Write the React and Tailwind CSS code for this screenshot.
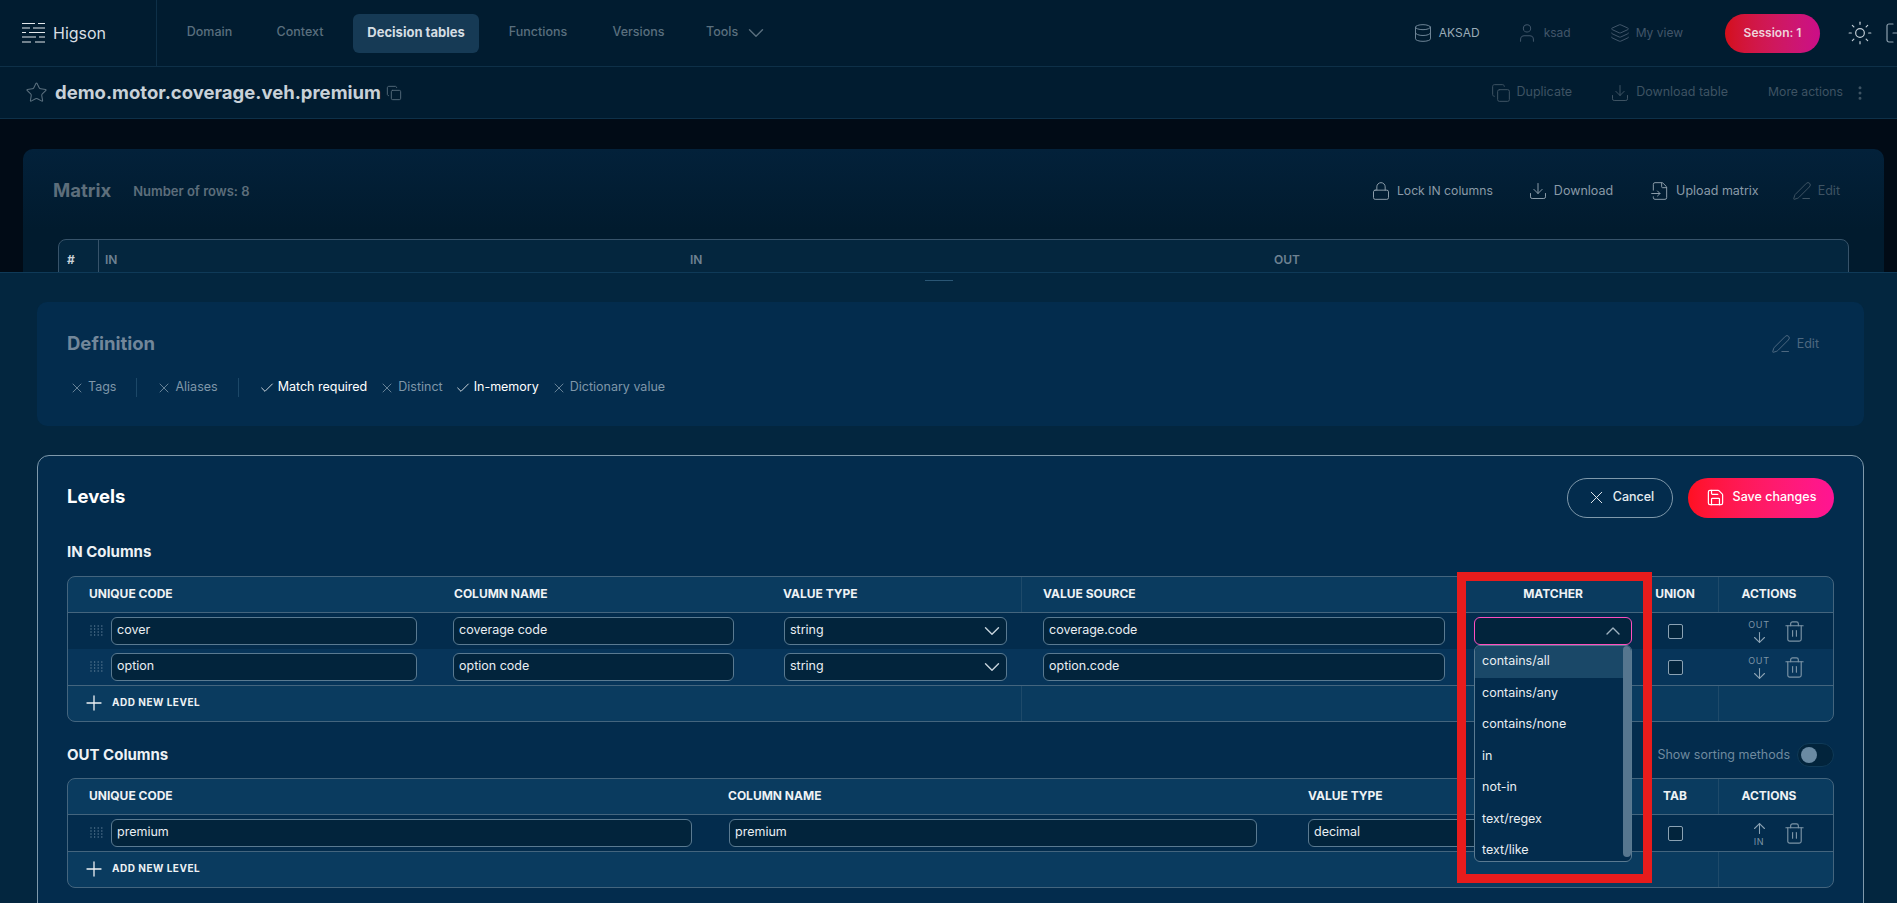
import React from "react";
import {
    ArrowDown, ArrowUp, Check, ChevronDown, ChevronUp, Copy, Database, Download, EllipsisVertical,
    FileInput, Layers, Lock, LogOut, PenLine, Plus, Save, Star, Sun, Trash2, User, X,
} from "lucide-react";

const IN_GRID = "grid grid-cols-[367px_331px_255px_436px_195px_66px_115px]";
const OUT_GRID = "grid grid-cols-[642px_580px_362px_66px_115px]";
const MATCHERS = ["contains/all", "contains/any", "contains/none", "in", "not-in", "text/regex", "text/like"];

function Logo() {
    return (
        <svg width="25" height="22" viewBox="0 0 25 22" fill="none" stroke="#e3e8ec" strokeWidth="1.2">
            <path d="M1 1.5h13M17 1.5h7M1 6h8M12 6h12M1 10.5h4M8 10.5h16M1 15h14M18 15h6M1 20h9M14 20h10" />
        </svg>
    );
}

function Grip() {
    return (
        <svg width="13" height="12" viewBox="0 0 13 12" fill="#5f7f97">
            {[1, 4, 7, 10].map((y) =>
                [1, 4.6, 8.2, 11.8].map((x) => <rect key={x + "-" + y} x={x - 0.6} y={y - 0.6} width="1.2" height="1.2" />)
            )}
        </svg>
    );
}

function Field({ children, className }) {
    return (
        <div className={"flex h-[28px] items-center rounded-md border border-[#5a7a91] bg-[#02243c] px-[5px] pb-[1px] text-[12.5px] text-[#e9eef2] " + className}>
            {children}
        </div>
    );
}

function SelectField({ children, className }) {
    return (
        <Field className={"justify-between " + className}>
            <span>{children}</span>
            <ChevronDown className="mr-[-4px] w-[26px] h-[26px] text-[#c7d3dc]" strokeWidth={1.3} />
        </Field>
    );
}

function NavItem({ children, active, className }) {
    return (
        <div className={"flex h-[39px] items-center rounded-md pb-[1px] " + (active ? "bg-[#163a55] text-[13px] font-bold text-[#d5dde3] " : "text-[12.5px] font-medium text-[#5a6f7e] ") + className}>
            {children}
        </div>
    );
}

function HeaderCell({ children, className }) {
    return (
        <div className={"flex h-[35px] items-center pb-[2px] text-[12px] font-bold text-[#eef2f5] " + className}>
            {children}
        </div>
    );
}

function Chip({ on, children }) {
    const Icon = on ? Check : X;
    return (
        <div className={"flex items-center gap-[3px] text-[12.5px] " + (on ? "text-white" : "text-[#7f97a9]")}>
            <Icon className="w-4 h-4" strokeWidth={1.2} />
            <span>{children}</span>
        </div>
    );
}

function ActionLink({ icon: Icon, children, className }) {
    return (
        <div className={"flex items-center gap-[6px] " + className}>
            <Icon className="w-5 h-5" strokeWidth={1.2} />
            <span>{children}</span>
        </div>
    );
}

function Checkbox() {
    return (
        <div className="flex items-center justify-center pr-[20px]">
            <div className="h-[15px] w-[15px] rounded-[2px] border border-[#8aa2b4] bg-[#02243c]" />
        </div>
    );
}

function RowActions({ out }) {
    return (
        <div className="flex items-center gap-[12px] pl-[29px]">
            <div className={"flex w-[24px] flex-col items-center text-[9px] leading-[9px] tracking-[0.08em] text-[#7c94a6] " + (out ? "mt-[3px]" : "")}>
                {out ? <span>OUT</span> : <ArrowUp className="w-[17px] h-[17px] text-[#8ba2b3]" strokeWidth={1.5} />}
                {out ? <ArrowDown className="w-[17px] h-[17px] text-[#8ba2b3]" strokeWidth={1.5} /> : <span>IN</span>}
            </div>
            <Trash2 className="w-[23px] h-[23px] text-[#7c94a6]" strokeWidth={1.2} />
        </div>
    );
}

function AddLevel() {
    return (
        <div className="flex h-[35px] items-center gap-[6px] pb-[2px] pl-[14px] text-[10px] font-bold tracking-[0.05em] text-[#eef2f5]">
            <Plus className="w-6 h-6" strokeWidth={1.3} />
            <span>ADD NEW LEVEL</span>
        </div>
    );
}

function InRow({ code, name, source, striped, matcher }) {
    return (
        <div className={IN_GRID + " h-[36px] items-center " + (striped ? "bg-[#07355a]" : "bg-[#032c4d]")}>
            <div className="flex items-center gap-[8px] pl-[22px] pr-[18px]">
                <Grip />
                <Field className="flex-1">{code}</Field>
            </div>
            <div className="pl-[18px] pr-[32px]"><Field>{name}</Field></div>
            <div className="pl-[18px] pr-[14px]"><SelectField>string</SelectField></div>
            <div className="pl-[22px] pr-[12px]"><Field>{source}</Field></div>
            <div className="relative pl-[17px] pr-[20px]">
                {matcher}
            </div>
            <Checkbox />
            <RowActions out />
        </div>
    );
}

function MatcherSelect() {
    return (
        <>
            <div className="flex h-[28px] items-center justify-end rounded-md border border-[#ff4fc0] bg-[#02243c] pr-[6px]">
                <ChevronUp className="w-6 h-6 text-[#9fb2c0]" strokeWidth={1.4} />
            </div>
            <div className="absolute left-[17px] top-[28px] z-10 h-[217px] w-[158px] overflow-hidden rounded-md border border-[#5a7a91] bg-[#032c4d]">
                {MATCHERS.map((m, i) => (
                    <div key={m} className={"flex h-[31.5px] items-center pl-[7px] text-[12.5px] text-[#e9eef2] " + (i === 0 ? "bg-[#1a4868]" : "")}>
                        {m}
                    </div>
                ))}
                <div className="absolute right-0 top-0 h-[211px] w-[8px] rounded-full bg-[#56768f]" />
            </div>
        </>
    );
}

export default function App() {
    return (
        <div className="flex h-[903px] w-full flex-col overflow-hidden bg-[#010b16] [font-family:Inter,sans-serif]">
            <header className="flex h-[67px] shrink-0 items-center border-b border-[#0e3048] bg-[#011c30]">
                <div className="flex h-[66px] w-[157px] shrink-0 items-center gap-[7px] border-r border-[#0e3048] pl-[21px]">
                    <Logo />
                    <span className="text-[16px] text-[#d8dfe4]">Higson</span>
                </div>
                <nav className="flex items-center gap-[14px] pl-[15px]">
                    <NavItem className="w-[75px] justify-center">Domain</NavItem>
                    <NavItem className="w-[78px] justify-center">Context</NavItem>
                    <NavItem active className="w-[126px] justify-center">Decision tables</NavItem>
                    <NavItem className="w-[90px] justify-center">Functions</NavItem>
                    <NavItem className="w-[83px] justify-center">Versions</NavItem>
                    <NavItem className="w-[90px] gap-[5px] pl-[12px]">Tools <ChevronDown className="w-[26px] h-[26px]" strokeWidth={1.3} /></NavItem>
                </nav>
                <div className="ml-auto flex items-center text-[12px]">
                    <div className="flex items-center gap-[6px] text-[#9aabb7]">
                        <Database className="w-5 h-5 text-[#6d8496]" strokeWidth={1.2} />
                        <span>AKSAD</span>
                    </div>
                    <div className="ml-[36px] flex items-center gap-[6px] text-[#41566a]">
                        <User className="w-[22px] h-[22px]" strokeWidth={1.1} />
                        <span>ksad</span>
                    </div>
                    <div className="ml-[39px] flex items-center gap-[6px] text-[#41566a]">
                        <Layers className="w-5 h-5" strokeWidth={1.2} />
                        <span>My view</span>
                    </div>
                    <div className="ml-[42px] flex h-[39px] w-[95px] items-center justify-center rounded-full bg-gradient-to-r from-[#d40f18] to-[#cb0d88] font-semibold text-[#eed3dc]">
                        Session: 1
                    </div>
                    <Sun className="ml-[27px] w-[26px] h-[26px] text-[#c3ced6]" strokeWidth={1.1} />
                    <LogOut className="ml-[11px] mr-[-11px] w-6 h-6 text-[#8da0ae]" strokeWidth={1.2} />
                </div>
            </header>

            <div className="flex h-[52px] shrink-0 items-center border-b border-[#0e3048] bg-[#011c30] pl-[25px] pr-[28px]">
                <Star className="w-[23px] h-[23px] text-[#5a6f7e]" strokeWidth={1.1} />
                <h1 className="ml-[7px] text-[18.5px] font-bold text-[#c8d1d8]">demo.motor.coverage.veh.premium</h1>
                <Copy className="ml-[5px] w-[16px] h-[16px] text-[#566c7c]" strokeWidth={1.4} />
                <div className="ml-auto flex items-center text-[12.5px] text-[#3e5363]">
                    <ActionLink icon={Copy}>Duplicate</ActionLink>
                    <ActionLink icon={Download} className="ml-[38px]">Download table</ActionLink>
                    <span className="ml-[40px] text-[12.2px]">More actions</span>
                    <EllipsisVertical className="ml-[8px] w-[18px] h-[18px]" strokeWidth={2} />
                </div>
            </div>

            <section className="h-[153px] shrink-0 overflow-hidden pl-[23px] pr-[13px] pt-[30px]">
                <div className="h-[200px] rounded-t-[10px] bg-gradient-to-b from-[#03213a] to-[#011b2e] to-40% px-[35px] pt-[30px]">
                    <div className="flex h-[24px] items-center pr-[9px]">
                        <h2 className="ml-[-5px] text-[18.5px] font-bold text-[#5d6e7b]">Matrix</h2>
                        <span className="ml-[22px] mt-[2px] text-[13px] font-semibold text-[#5d6e7b]">Number of rows: 8</span>
                        <div className="ml-auto flex items-center text-[12.5px] text-[#8a9ba8]">
                            <ActionLink icon={Lock} className="text-[12.2px]">Lock IN columns</ActionLink>
                            <ActionLink icon={Download} className="ml-[35px]">Download</ActionLink>
                            <ActionLink icon={FileInput} className="ml-[37px]">Upload matrix</ActionLink>
                            <ActionLink icon={PenLine} className="ml-[33px] text-[#3e5363]">Edit</ActionLink>
                        </div>
                    </div>
                    <div className="mt-[36px] flex h-[60px] rounded-t-[8px] border border-[#37536a] bg-[#04263e] text-[12px] font-semibold text-[#6e8292]">
                        <div className="flex h-[40px] w-[40px] items-center border-r border-[#37536a] pl-[8px] font-bold text-[#c8d1d8]">#</div>
                        <div className="flex h-[40px] w-[591px] items-center pl-[6px]">IN</div>
                        <div className="flex h-[40px] w-[584px] items-center">IN</div>
                        <div className="flex h-[40px] items-center">OUT</div>
                    </div>
                </div>
            </section>

            <main className="min-h-0 flex-1 border-t border-[#0f3a58] bg-[#03263f] pl-[37px] pr-[33px]">
                <div className="flex h-[29px] justify-center pr-[24px] pt-[7px]">
                    <div className="h-[1px] w-[28px] bg-[#2a5675]" />
                </div>

                <section className="h-[124px] rounded-[10px] bg-[#032c4d] pl-[30px] pr-[45px] pt-[30px]">
                    <div className="flex h-[24px] items-center justify-between">
                        <h2 className="text-[18.5px] font-bold text-[#72879a]">Definition</h2>
                        <ActionLink icon={PenLine} className="text-[12.5px] text-[#4d6880]">Edit</ActionLink>
                    </div>
                    <div className="mt-[22px] flex h-[19px] items-center pl-[2px]">
                        <Chip>Tags</Chip>
                        <div className="ml-[20px] mr-[19px] h-[19px] w-px bg-[#1c4868]" />
                        <Chip>Aliases</Chip>
                        <div className="mx-[20px] h-[19px] w-px bg-[#1c4868]" />
                        <div className="flex items-center gap-[12px]">
                            <Chip on>Match required</Chip>
                            <Chip>Distinct</Chip>
                            <Chip on>In-memory</Chip>
                            <Chip>Dictionary value</Chip>
                        </div>
                    </div>
                </section>

                <section className="relative mt-[29px] h-[460px] rounded-[12px] border border-[#7f99ab] bg-[#032c4d] px-[29px] pt-[22px]">
                    <div className="flex h-[40px] items-center justify-between">
                        <h2 className="mt-[-2px] text-[18.5px] font-bold text-white">Levels</h2>
                        <div className="flex items-center gap-[15px]">
                            <div className="flex h-[40px] w-[106px] items-center justify-center gap-[6px] rounded-full border border-[#7f99ab] pb-[1px] text-[12.5px] font-medium text-[#e6ecf0]">
                                <X className="w-[21px] h-[21px]" strokeWidth={1.1} />
                                <span>Cancel</span>
                            </div>
                            <div className="flex h-[40px] w-[146px] items-center justify-center gap-[8px] rounded-full bg-gradient-to-r from-[#ff1020] to-[#ff1493] pb-[1px] text-[12.5px] font-medium text-white">
                                <Save className="w-[19px] h-[19px]" strokeWidth={1.5} />
                                <span>Save changes</span>
                            </div>
                        </div>
                    </div>

                    <h3 className="mt-[24px] text-[15px] font-bold leading-[20px] text-[#eef2f5]">IN Columns</h3>
                    <div className="mt-[14px] rounded-[8px] border border-[#44657e] bg-[#0a3b5f]">
                        <div className={IN_GRID + " border-b border-[#44657e]"}>
                            <HeaderCell className="pl-[21px]">UNIQUE CODE</HeaderCell>
                            <HeaderCell className="pl-[19px]">COLUMN NAME</HeaderCell>
                            <HeaderCell className="pl-[17px]">VALUE TYPE</HeaderCell>
                            <HeaderCell className="border-l border-[#1e4a6a] pl-[21px]">VALUE SOURCE</HeaderCell>
                            <HeaderCell className="justify-center pr-[3px]">MATCHER</HeaderCell>
                            <HeaderCell className="justify-center pr-[20px]">UNION</HeaderCell>
                            <HeaderCell className="justify-center border-l border-[#1e4a6a] pr-[14px]">ACTIONS</HeaderCell>
                        </div>
                        <InRow code="cover" name="coverage code" source="coverage.code" matcher={<MatcherSelect />} />
                        <InRow code="option" name="option code" source="option.code" striped matcher={<div className="h-[28px] rounded-md border border-[#5a7a91] bg-[#02243c]" />} />
                        <div className={IN_GRID + " border-t border-[#44657e]"}>
                            <div className="col-span-3"><AddLevel /></div>
                            <div className="col-span-3 border-l border-[#1e4a6a]" />
                            <div className="border-l border-[#1e4a6a]" />
                        </div>
                    </div>

                    <div className="mt-[21px] flex h-[24px] items-center justify-between">
                        <h3 className="text-[15px] font-bold text-[#eef2f5]">OUT Columns</h3>
                        <div className="flex items-center gap-[7px]">
                            <span className="text-[12.5px] text-[#6f8a9f]">Show sorting methods</span>
                            <div className="flex h-[24px] w-[37px] items-center rounded-full border border-[#0f3a58] bg-[#02243c] pl-[3px]">
                                <div className="h-[16px] w-[16px] rounded-full bg-[#6a8aa3]" />
                            </div>
                        </div>
                    </div>

                    <div className="mt-[11px] rounded-[8px] border border-[#44657e] bg-[#0a3b5f]">
                        <div className={OUT_GRID + " border-b border-[#44657e]"}>
                            <HeaderCell className="pl-[21px]">UNIQUE CODE</HeaderCell>
                            <HeaderCell className="pl-[18px]">COLUMN NAME</HeaderCell>
                            <HeaderCell className="pl-[18px]">VALUE TYPE</HeaderCell>
                            <HeaderCell className="justify-center pr-[20px]">TAB</HeaderCell>
                            <HeaderCell className="justify-center border-l border-[#1e4a6a] pr-[14px]">ACTIONS</HeaderCell>
                        </div>
                        <div className={OUT_GRID + " h-[36px] items-center bg-[#032c4d]"}>
                            <div className="flex items-center gap-[8px] pl-[22px] pr-[18px]">
                                <Grip />
                                <Field className="flex-1">premium</Field>
                            </div>
                            <div className="pl-[19px] pr-[33px]"><Field>premium</Field></div>
                            <div className="pl-[18px] pr-[27px]"><SelectField>decimal</SelectField></div>
                            <Checkbox />
                            <RowActions />
                        </div>
                        <div className={OUT_GRID + " border-t border-[#44657e]"}>
                            <div className="col-span-4"><AddLevel /></div>
                            <div className="border-l border-[#1e4a6a]" />
                        </div>
                    </div>

                    <div className="pointer-events-none absolute left-[1419px] top-[116px] z-20 h-[311px] w-[195px] border-[9px] border-[#e81c1c]" />
                </section>
            </main>
        </div>
    );
}
